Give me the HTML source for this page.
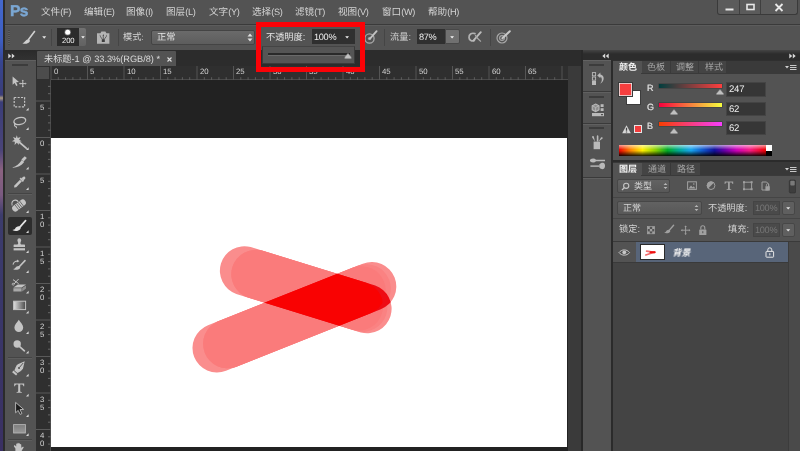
<!DOCTYPE html>
<html lang="zh"><head><meta charset="utf-8"><title>Photoshop</title><style>
html,body{margin:0;padding:0;}
body{width:800px;height:451px;overflow:hidden;position:relative;background:#535353;font-family:"Liberation Sans", "Noto Sans CJK SC", sans-serif;text-rendering:geometricPrecision;}
body>div,body>svg{position:absolute;}
.t{white-space:nowrap;line-height:1.2;will-change:transform;filter:blur(.3px);}
body>svg{filter:blur(.3px);}
</style></head><body>
<div style="left:0px;top:0px;width:3.5px;height:451px;background:linear-gradient(#4468cc 0px,#3d5ec2 40px,#374590 62px,#3a3d78 95px,#a89880 98px,#3a3d78 102px,#4a4478 150px,#8a6280 170px,#7a5a80 195px,#3c3c6c 215px,#39376a 300px,#3a3062 451px);"></div>
<div style="left:2.8px;top:0px;width:2.2px;height:451px;background:#2b2b2b;"></div>
<div style="left:5px;top:0px;width:795px;height:24px;background:#535353;"></div>
<div class="t" style="left:9.800px;top:2.600px;font-size:15.600px;font-weight:bold;color:#7ba7d3;letter-spacing:-0.700px;-webkit-text-stroke:.45px #7ba7d3">Ps</div>
<div class="t" style="left:41px;top:6.8px;font-size:9.6px;color:#d4d4d4;fill:#d4d4d4;">文件<span style="font-size:9.2px;letter-spacing:-0.35px">(F)</span></div>
<div class="t" style="left:83.6px;top:6.8px;font-size:9.6px;color:#d4d4d4;fill:#d4d4d4;">编辑<span style="font-size:9.2px;letter-spacing:-0.35px">(E)</span></div>
<div class="t" style="left:126.4px;top:6.8px;font-size:9.6px;color:#d4d4d4;fill:#d4d4d4;">图像<span style="font-size:9.2px;letter-spacing:-0.35px">(I)</span></div>
<div class="t" style="left:166.4px;top:6.8px;font-size:9.6px;color:#d4d4d4;fill:#d4d4d4;">图层<span style="font-size:9.2px;letter-spacing:-0.35px">(L)</span></div>
<div class="t" style="left:209px;top:6.8px;font-size:9.6px;color:#d4d4d4;fill:#d4d4d4;">文字<span style="font-size:9.2px;letter-spacing:-0.35px">(Y)</span></div>
<div class="t" style="left:252px;top:6.8px;font-size:9.6px;color:#d4d4d4;fill:#d4d4d4;">选择<span style="font-size:9.2px;letter-spacing:-0.35px">(S)</span></div>
<div class="t" style="left:295px;top:6.8px;font-size:9.6px;color:#d4d4d4;fill:#d4d4d4;">滤镜<span style="font-size:9.2px;letter-spacing:-0.35px">(T)</span></div>
<div class="t" style="left:337.5px;top:6.8px;font-size:9.6px;color:#d4d4d4;fill:#d4d4d4;">视图<span style="font-size:9.2px;letter-spacing:-0.35px">(V)</span></div>
<div class="t" style="left:381.5px;top:6.8px;font-size:9.6px;color:#d4d4d4;fill:#d4d4d4;">窗口<span style="font-size:9.2px;letter-spacing:-0.35px">(W)</span></div>
<div class="t" style="left:428.4px;top:6.8px;font-size:9.6px;color:#d4d4d4;fill:#d4d4d4;">帮助<span style="font-size:9.2px;letter-spacing:-0.35px">(H)</span></div>
<div style="left:717px;top:0px;width:81px;height:14.5px;background:#5b5b5b;border:1px solid #3a3a3a;border-top:none;border-radius:0 0 3px 3px;box-sizing:border-box;"></div>
<div style="left:739px;top:0px;width:1px;height:14px;background:#3f3f3f;"></div>
<div style="left:760px;top:0px;width:1px;height:14px;background:#3f3f3f;"></div>
<svg style="left:717px;top:0px;" width="81" height="15" viewBox="0 0 81 15"><path d="M8.5 9.5h8" stroke="#e8e8e8" stroke-width="2"/><rect x="30" y="4.5" width="7" height="5" fill="none" stroke="#e8e8e8" stroke-width="1.6"/><path d="M58.5 4l7 7M65.5 4l-7 7" stroke="#e8e8e8" stroke-width="1.8"/></svg>
<div style="left:5px;top:23.5px;width:795px;height:1.2px;background:#3a3a3a;"></div>
<div style="left:5px;top:24.7px;width:795px;height:1px;background:#5c5c5c;"></div>
<div style="left:5px;top:25.5px;width:795px;height:24px;background:#535353;"></div>
<div style="left:8px;top:30px;width:2px;height:15px;background:repeating-linear-gradient(#474747 0 1px,#5e5e5e 1px 2px);"></div>
<svg style="left:19.5px;top:29px;" width="20" height="18" viewBox="0 0 20 18"><path d="M14.5 2.5L8.5 10.5" stroke="#d0d0d0" stroke-width="1.6" stroke-linecap="round"/><path d="M8.8 10.2c-2 .2-3.2 1.2-4.2 2.6-.6.8-1.4 1.2-2.2 1.4 2.4 1 5.6.6 7-1.2.8-1 .6-2.2-.6-2.8z" fill="#d0d0d0"/></svg>
<svg style="left:42.3px;top:36px;" width="5" height="3" viewBox="0 0 5 3"><path d="M.2 .2h4L2.200 2.700z" fill="#e4e4e4"/></svg>
<div style="left:51px;top:29px;width:1px;height:17px;background:#454545;"></div>
<div style="left:57.2px;top:28px;width:21.6px;height:18px;background:#2b2b2b;"></div>
<svg style="left:57px;top:28px;" width="23" height="10" viewBox="0 0 23 10"><circle cx="10.700" cy="4.200" r="2.500" fill="#fff"/><circle cx="10.700" cy="4.200" r="3.300" fill="#fff" opacity=".3"/></svg>
<div class="t" style="left:62.200px;top:36.200px;font-size:7.700px;color:#f2f2f2;letter-spacing:-0.1px">200</div>
<div style="left:78.8px;top:28px;width:7.4px;height:18.3px;background:linear-gradient(#727272,#626262);border-radius:0 2px 2px 0;"></div>
<svg style="left:80.8px;top:36px;" width="4" height="3" viewBox="0 0 4 3"><path d="M.2 .2h3.600L2 2.400z" fill="#f4f4f4"/></svg>
<svg style="left:97px;top:31px;" width="13" height="13" viewBox="0 0 13 13"><path d="M0 2.200h3.400l1-1.700h4l1 1.700h3V12.700H0z" fill="#b4b4b4"/><path d="M2.600 3.400l1.300 1.800-.7.800zM6.300 3l.8 2.200h-1.600zM10 3.400L8.700 5.200l.7.800z" fill="#3e3e3e"/><path d="M3.600 5.800l1.800 2.600M6.300 5.400v3M9 5.800L7.200 8.400" stroke="#4a4a4a" stroke-width=".8"/><rect x="4.800" y="8.200" width="3" height="2.800" fill="#3e3e3e"/></svg>
<div style="left:118px;top:29px;width:1px;height:17px;background:#454545;"></div>
<div class="t" style="left:123px;top:32px;font-size:9.2px;color:#d4d4d4;fill:#d4d4d4;">模式<span style="font-size:8.004px;letter-spacing:0.1px">:</span></div>
<div style="left:151px;top:29.5px;width:104px;height:15.5px;background:linear-gradient(#6a6a6a,#5d5d5d);border:1px solid #444;box-sizing:border-box;border-radius:2px;"></div>
<div class="t" style="left:157px;top:32px;font-size:9.2px;color:#e6e6e6;fill:#e6e6e6;">正常</div>
<svg style="left:246.5px;top:33px;" width="6" height="9" viewBox="0 0 6 9"><path d="M.5 3.400L3 .6l2.500 2.800zM.5 5.600L3 8.400l2.500-2.800z" fill="#e0e0e0"/></svg>
<div class="t" style="left:265.5px;top:32px;font-size:9.2px;color:#e6e6e6;fill:#e6e6e6;">不透明度<span style="font-size:9.2px;letter-spacing:0.1px">:</span></div>
<div style="left:311.5px;top:29.3px;width:27.5px;height:15px;background:#2f2f2f;"></div>
<div class="t" style="left:314px;top:31.5px;font-size:9.200px;color:#f0f0f0;letter-spacing:-0.3px">100%</div>
<div style="left:339px;top:29.3px;width:15.5px;height:15px;background:#303030;"></div>
<svg style="left:344.6px;top:35.8px;" width="5" height="3" viewBox="0 0 5 3"><path d="M.2 .2h3.800L2.100 2.500z" fill="#f0f0f0"/></svg>
<svg style="left:364px;top:30px;" width="14" height="14" viewBox="0 0 14 14"><circle cx="5.500" cy="8.500" r="4.600" fill="none" stroke="#a8a8a8" stroke-width="1.3"/><circle cx="5.500" cy="8.500" r="1.600" fill="#a8a8a8"/><path d="M12.600 1.200L6 8.600" stroke="#c4c4c4" stroke-width="1.8" stroke-linecap="round"/></svg>
<div style="left:383.5px;top:29px;width:1px;height:17px;background:#454545;"></div>
<div class="t" style="left:390px;top:32px;font-size:9.2px;color:#d4d4d4;fill:#d4d4d4;">流量<span style="font-size:9.2px;letter-spacing:0.1px">:</span></div>
<div style="left:416.5px;top:29.3px;width:28.5px;height:15px;background:#2f2f2f;"></div>
<div class="t" style="left:418.5px;top:31.5px;font-size:9.200px;color:#f0f0f0;letter-spacing:-0.3px">87%</div>
<div style="left:445px;top:29.3px;width:14.5px;height:15px;background:#707070;border-radius:0 2px 2px 0;border:1px solid #484848;box-sizing:border-box;"></div>
<svg style="left:449.8px;top:36px;" width="5" height="3" viewBox="0 0 5 3"><path d="M.2 .2h3.800L2.100 2.500z" fill="#f4f4f4"/></svg>
<svg style="left:467px;top:30px;" width="16" height="14" viewBox="0 0 16 14"><path d="M8 3.600C4.400 2.400 1.800 4.600 2 7.600c.2 2.800 3 4.200 5.400 2.800" fill="none" stroke="#b2b2b2" stroke-width="1.700" stroke-linecap="round"/><path d="M13.800 2.200L6.600 10.400" stroke="#bcbcbc" stroke-width="1.900" stroke-linecap="round"/><path d="M8.400 5.400C10 8 11.600 9.800 13.600 11.200" stroke="#a8a8a8" stroke-width="1.200" fill="none" stroke-linecap="round"/></svg>
<div style="left:489.5px;top:29px;width:1px;height:17px;background:#454545;"></div>
<svg style="left:496px;top:30px;" width="16" height="14" viewBox="0 0 16 14"><circle cx="6" cy="8" r="5" fill="none" stroke="#a8a8a8" stroke-width="1.2"/><circle cx="6" cy="8" r="2.400" fill="none" stroke="#a8a8a8" stroke-width="1.1"/><path d="M13.800 1.200L6.400 8.200" stroke="#c8c8c8" stroke-width="2" stroke-linecap="round"/></svg>
<div style="left:5px;top:49.5px;width:795px;height:401.5px;background:#2b2b2b;"></div>
<div style="left:5px;top:49.5px;width:30.5px;height:10px;background:linear-gradient(#2a2a2a,#323232);"></div>
<svg style="left:8px;top:52.5px;" width="8" height="6" viewBox="0 0 8 6"><path d="M.3 .4L3.200 3 .3 5.600zM3.800 .4L6.700 3 3.800 5.600z" fill="#d8d8d8"/></svg>
<div style="left:5px;top:59.5px;width:30.5px;height:391.5px;background:#535353;"></div>
<div style="left:5px;top:59.5px;width:30.5px;height:1px;background:#606060;"></div>
<div style="left:12px;top:64px;width:16px;height:1.5px;background:#3c3c3c;"></div>
<div style="left:8px;top:193px;width:24px;height:1px;background:#444;"></div>
<div style="left:8px;top:194px;width:24px;height:1px;background:#5d5d5d;"></div>
<div style="left:8px;top:356.5px;width:24px;height:1px;background:#444;"></div>
<div style="left:8px;top:357.5px;width:24px;height:1px;background:#5d5d5d;"></div>
<div style="left:8px;top:439px;width:24px;height:1px;background:#444;"></div>
<div style="left:8px;top:440px;width:24px;height:1px;background:#5d5d5d;"></div>
<div style="left:8px;top:216.5px;width:23.5px;height:18px;background:#2d2d2d;border-radius:2px;"></div>
<svg style="left:0px;top:0px;" width="36" height="451" viewBox="0 0 36 451"><path d="M12.600 76.600v8.200l2.100-1.900 1.500 3 1.400-.7-1.500-3 2.900-.1z" fill="#c4c4c4"/><path d="M22.800 80.800v5.600M20 83.600h5.600" stroke="#c4c4c4" stroke-width="1"/><path d="M22.800 79.800l1.100 1.300h-2.200zM22.800 87.400l1.100-1.300h-2.200zM19 83.600l1.300-1.100v2.200zM26.600 83.600l-1.300-1.100v2.200z" fill="#c4c4c4"/><rect x="14.200" y="97.500" width="10.400" height="9.400" fill="none" stroke="#c4c4c4" stroke-width="1.200" stroke-dasharray="2.100 1.300"/><path d="M28.600 107.800V110.400H26z" fill="#d6d6d6"/><ellipse cx="19.800" cy="121" rx="6" ry="3.500" fill="none" stroke="#c4c4c4" stroke-width="1.300" transform="rotate(-12 19.800 121)"/><path d="M15.800 123.600c-1.600.6-1.800 2.200-.4 2.600 1 .3 1.400 1 .8 2" fill="none" stroke="#c4c4c4" stroke-width="1.100"/><path d="M28.600 127.300V129.900H26z" fill="#d6d6d6"/><path d="M18.500 141.500L26.200 148.200" stroke="#c4c4c4" stroke-width="1.700" stroke-linecap="round"/><path d="M16.800 135.200l.9 2.900 2.900-1.100-1.500 2.700 2.600 1.600-3 .5.300 3.100-2.200-2.200-2.200 2.200.3-3.100-3-.5 2.600-1.600-1.500-2.700 2.900 1.100z" fill="#c4c4c4"/><path d="M28.600 147.300V149.900H26z" fill="#d6d6d6"/><path d="M12.200 167.600c4-1.200 7.400-3.800 9.600-7.600l2.400 2c-2.800 3.800-7.600 5.900-12 5.600z" fill="#c4c4c4"/><path d="M21.400 159.400l3.400-3.200 2 1.700-3.200 3.600z" fill="#c4c4c4"/><path d="M28.600 166.800V169.400H26z" fill="#d6d6d6"/><path d="M14 187.400l.4-2 5.600-5.600 1.800 1.800-5.600 5.600z" fill="#c4c4c4"/><path d="M19.600 178.800l1.300-1.300 3.200 3.200-1.300 1.300z" fill="#c4c4c4"/><path d="M21.800 178.600c.6-1.600 2.200-2.600 3.200-1.600s0 2.600-1.600 3.200z" fill="#c4c4c4"/><path d="M28.600 187.300V189.900H26z" fill="#d6d6d6"/><g transform="rotate(-38 19 205.500)"><rect x="11.200" y="202.300" width="15.600" height="6.400" rx="3.200" fill="#c4c4c4"/><path d="M16.200 202.300v6.400M18.200 202.300v6.400M20.200 202.300v6.400M22.200 202.300v6.400" stroke="#535353" stroke-width=".7"/></g><path d="M12.200 205.500c-1.200-3 .6-5.600 3.400-5.400 1.400.1 2.200.8 2.600 1.600" fill="none" stroke="#c4c4c4" stroke-width="1.100"/><path d="M28.600 210.300V212.900H26z" fill="#d6d6d6"/><path d="M25.600 220.600L19.400 227.600" stroke="#e4e4e4" stroke-width="1.700" stroke-linecap="round"/><path d="M19.400 226.400c-2-.2-3.400.8-4.200 2.200-.6 1-1.600 1.400-2.800 1.400 2.400 1.600 6.200 1.200 7.800-.8.800-1 .4-2.200-.8-2.800z" fill="#e4e4e4"/><path d="M28.600 230.300V232.900H26z" fill="#d6d6d6"/><path d="M17.400 240.200a1.900 1.900 0 0 1 3.800 0c0 1.200-.8 1.800-.8 3 0 .8.600 1.400 1.600 1.400h2.200c.6 0 .8.400.8 1v1.400H13.600v-1.400c0-.6.200-1 .8-1h2.200c1 0 1.600-.6 1.600-1.400 0-1.200-.8-1.800-.8-3z" fill="#c4c4c4"/><rect x="13.600" y="248.200" width="11.400" height="2.200" fill="#c4c4c4"/><path d="M28.600 250.300V252.900H26z" fill="#d6d6d6"/><path d="M25 260.600L19 267" stroke="#c4c4c4" stroke-width="1.600" stroke-linecap="round"/><path d="M19.200 266c-1.800-.2-3 .6-3.800 1.800-.6.800-1.400 1.200-2.400 1.200 2.200 1.400 5.400 1 6.800-.6.800-.9.400-1.900-.6-2.400z" fill="#c4c4c4"/><path d="M13 264.600c.4-2.400 2.600-3.800 5-3.400" fill="none" stroke="#c4c4c4" stroke-width="1.100"/><path d="M17.200 259.400l2.200 1.800-2.600 1.200z" fill="#c4c4c4"/><path d="M28.600 270.300V272.900H26z" fill="#d6d6d6"/><path d="M13.400 287.400l4.400-3h8.200l-4.400 3z" fill="#c4c4c4"/><path d="M13.400 288.200h8.200v3.200h-8.200z" fill="#a8a8a8"/><path d="M22.200 288l3.800-2.600v3.200l-3.800 2.800z" fill="#8e8e8e"/><path d="M13 279.600l5.600 4M18.600 279l-4.600 5" stroke="#c4c4c4" stroke-width="1"/><circle cx="13.200" cy="284.200" r="1" fill="none" stroke="#c4c4c4" stroke-width=".8"/><path d="M28.600 290.800V293.400H26z" fill="#d6d6d6"/><defs><linearGradient id="gt"><stop offset="0" stop-color="#e0e0e0"/><stop offset="1" stop-color="#4a4a4a"/></linearGradient><linearGradient id="gs" x2="0" y2="1"><stop offset="0" stop-color="#7c7c7c"/><stop offset="1" stop-color="#9a9a9a"/></linearGradient></defs><rect x="13.600" y="301.200" width="12" height="8.400" fill="url(#gt)" stroke="#c4c4c4" stroke-width="1"/><path d="M28.600 310.800V313.400H26z" fill="#d6d6d6"/><path d="M18.800 319.800c1.600 2.600 4.400 5 4.400 7.800a4.400 4.400 0 0 1-8.800 0c0-2.800 2.800-5.200 4.400-7.800z" fill="#c4c4c4"/><path d="M28.600 331.300V333.900H26z" fill="#d6d6d6"/><circle cx="17.200" cy="344" r="3.700" fill="#c4c4c4"/><path d="M19.600 346.600L24.400 350.800" stroke="#c4c4c4" stroke-width="1.700" stroke-linecap="round"/><path d="M28.600 350.800V353.400H26z" fill="#d6d6d6"/><g transform="rotate(40 19 368)"><path d="M19 359.200l3.400 6.600c.4 2.400-.6 5-1.400 7h-4c-.8-2-1.800-4.600-1.400-7z" fill="#c4c4c4"/><path d="M19 361.500v6" stroke="#535353" stroke-width=".9"/><circle cx="19" cy="368" r="1" fill="#535353"/><rect x="16.400" y="373.600" width="5.200" height="2" fill="#c4c4c4"/></g><path d="M28.600 373.800V376.400H26z" fill="#d6d6d6"/><path d="M14.200 383.400h10v2.800h-.8c-.2-1.200-.6-1.700-1.800-1.700h-1.400v6.600c0 .8.400 1 1.600 1v.7h-5.200v-.7c1.200 0 1.600-.2 1.600-1v-6.600h-1.400c-1.200 0-1.600.5-1.800 1.700h-.8z" fill="#c4c4c4"/><path d="M28.600 393.800V396.400H26z" fill="#d6d6d6"/><path d="M15.600 402.400v10.400l2.600-2.400 1.900 4 1.800-.8-1.900-4 3.600-.2z" fill="#1c1c1c" stroke="#bdbdbd" stroke-width=".9" stroke-linejoin="round"/><path d="M28.600 414.300V416.900H26z" fill="#d6d6d6"/><rect x="13.600" y="424.600" width="11.800" height="8.400" fill="url(#gs)" stroke="#b4b4b4" stroke-width=".9"/><path d="M28.600 433.300V435.900H26z" fill="#d6d6d6"/><path d="M15.400 451v-2.600l-1.400-2c-.4-.8.600-1.400 1.200-.8l1 1v-2.400c0-.8 1.200-.8 1.200 0v-.8c0-.8 1.300-.8 1.300 0v.4c0-.8 1.300-.8 1.300 0v.8c0-.7 1.200-.7 1.200 0l.2 3.400c.6-.8 1.600-1.600 2.200-1 .4.400-.6 1.400-1.200 2.600l-.8 1.400z" fill="#c4c4c4"/></svg>
<div style="left:36px;top:49.5px;width:545px;height:16px;background:#2c2c2c;"></div>
<div style="left:36.5px;top:51px;width:139.5px;height:14.5px;background:#535353;border-radius:1px 1px 0 0;"></div>
<div class="t" style="left:43.5px;top:53.5px;font-size:9.2px;color:#dadada;fill:#dadada;">未标题<span style="font-size:9.2px;letter-spacing:0px">-1 @ 33.3%(RGB/8) *</span></div>
<svg style="left:165.5px;top:55.5px;" width="8" height="8" viewBox="0 0 8 8"><path d="M1.500 1.500l4 4M5.500 1.500l-4 4" stroke="#dcdcdc" stroke-width="1.100"/></svg>
<div style="left:36px;top:65.5px;width:532px;height:14px;background:#2f2f2f;"></div>
<div style="left:36px;top:79.5px;width:14.5px;height:371.5px;background:#2f2f2f;"></div>
<div style="left:36.5px;top:66.5px;width:12.5px;height:12px;background:#4c4c4c;"></div>
<div style="left:50.5px;top:79px;width:517.5px;height:0.8px;background:#4a4a4a;"></div>
<div style="left:50px;top:79.5px;width:0.8px;height:371.5px;background:#4a4a4a;"></div>
<div style="left:51px;top:80px;width:517px;height:371px;background:#222222;"></div>
<div style="left:51px;top:137.5px;width:516.2px;height:309.3px;background:#ffffff;"></div>
<div style="left:568px;top:65.5px;width:12.5px;height:385.5px;background:#3a3a3a;"></div>
<div style="left:580.5px;top:49.5px;width:2px;height:401.5px;background:#282828;"></div>
<svg style="left:0px;top:65.5px;" width="568" height="14" viewBox="0 0 568 14"><path d="M51.0 0V14" stroke="#555" stroke-width="1"/><path d="M58.3 11.200V14" stroke="#5c5c5c" stroke-width="1"/><path d="M65.6 11.200V14" stroke="#5c5c5c" stroke-width="1"/><path d="M72.9 11.200V14" stroke="#5c5c5c" stroke-width="1"/><path d="M80.2 11.200V14" stroke="#5c5c5c" stroke-width="1"/><path d="M87.5 0V14" stroke="#555" stroke-width="1"/><path d="M94.8 11.200V14" stroke="#5c5c5c" stroke-width="1"/><path d="M102.1 11.200V14" stroke="#5c5c5c" stroke-width="1"/><path d="M109.4 11.200V14" stroke="#5c5c5c" stroke-width="1"/><path d="M116.7 11.200V14" stroke="#5c5c5c" stroke-width="1"/><path d="M124.0 0V14" stroke="#555" stroke-width="1"/><path d="M131.3 11.200V14" stroke="#5c5c5c" stroke-width="1"/><path d="M138.6 11.200V14" stroke="#5c5c5c" stroke-width="1"/><path d="M145.9 11.200V14" stroke="#5c5c5c" stroke-width="1"/><path d="M153.2 11.200V14" stroke="#5c5c5c" stroke-width="1"/><path d="M160.5 0V14" stroke="#555" stroke-width="1"/><path d="M167.8 11.200V14" stroke="#5c5c5c" stroke-width="1"/><path d="M175.1 11.200V14" stroke="#5c5c5c" stroke-width="1"/><path d="M182.4 11.200V14" stroke="#5c5c5c" stroke-width="1"/><path d="M189.7 11.200V14" stroke="#5c5c5c" stroke-width="1"/><path d="M197.0 0V14" stroke="#555" stroke-width="1"/><path d="M204.3 11.200V14" stroke="#5c5c5c" stroke-width="1"/><path d="M211.6 11.200V14" stroke="#5c5c5c" stroke-width="1"/><path d="M218.9 11.200V14" stroke="#5c5c5c" stroke-width="1"/><path d="M226.2 11.200V14" stroke="#5c5c5c" stroke-width="1"/><path d="M233.5 0V14" stroke="#555" stroke-width="1"/><path d="M240.8 11.200V14" stroke="#5c5c5c" stroke-width="1"/><path d="M248.1 11.200V14" stroke="#5c5c5c" stroke-width="1"/><path d="M255.4 11.200V14" stroke="#5c5c5c" stroke-width="1"/><path d="M262.7 11.200V14" stroke="#5c5c5c" stroke-width="1"/><path d="M270.0 0V14" stroke="#555" stroke-width="1"/><path d="M277.3 11.200V14" stroke="#5c5c5c" stroke-width="1"/><path d="M284.6 11.200V14" stroke="#5c5c5c" stroke-width="1"/><path d="M291.9 11.200V14" stroke="#5c5c5c" stroke-width="1"/><path d="M299.2 11.200V14" stroke="#5c5c5c" stroke-width="1"/><path d="M306.5 0V14" stroke="#555" stroke-width="1"/><path d="M313.8 11.200V14" stroke="#5c5c5c" stroke-width="1"/><path d="M321.1 11.200V14" stroke="#5c5c5c" stroke-width="1"/><path d="M328.4 11.200V14" stroke="#5c5c5c" stroke-width="1"/><path d="M335.7 11.200V14" stroke="#5c5c5c" stroke-width="1"/><path d="M343.0 0V14" stroke="#555" stroke-width="1"/><path d="M350.3 11.200V14" stroke="#5c5c5c" stroke-width="1"/><path d="M357.6 11.200V14" stroke="#5c5c5c" stroke-width="1"/><path d="M364.9 11.200V14" stroke="#5c5c5c" stroke-width="1"/><path d="M372.2 11.200V14" stroke="#5c5c5c" stroke-width="1"/><path d="M379.5 0V14" stroke="#555" stroke-width="1"/><path d="M386.8 11.200V14" stroke="#5c5c5c" stroke-width="1"/><path d="M394.1 11.200V14" stroke="#5c5c5c" stroke-width="1"/><path d="M401.4 11.200V14" stroke="#5c5c5c" stroke-width="1"/><path d="M408.7 11.200V14" stroke="#5c5c5c" stroke-width="1"/><path d="M416.0 0V14" stroke="#555" stroke-width="1"/><path d="M423.3 11.200V14" stroke="#5c5c5c" stroke-width="1"/><path d="M430.6 11.200V14" stroke="#5c5c5c" stroke-width="1"/><path d="M437.9 11.200V14" stroke="#5c5c5c" stroke-width="1"/><path d="M445.2 11.200V14" stroke="#5c5c5c" stroke-width="1"/><path d="M452.5 0V14" stroke="#555" stroke-width="1"/><path d="M459.8 11.200V14" stroke="#5c5c5c" stroke-width="1"/><path d="M467.1 11.200V14" stroke="#5c5c5c" stroke-width="1"/><path d="M474.4 11.200V14" stroke="#5c5c5c" stroke-width="1"/><path d="M481.7 11.200V14" stroke="#5c5c5c" stroke-width="1"/><path d="M489.0 0V14" stroke="#555" stroke-width="1"/><path d="M496.3 11.200V14" stroke="#5c5c5c" stroke-width="1"/><path d="M503.6 11.200V14" stroke="#5c5c5c" stroke-width="1"/><path d="M510.9 11.200V14" stroke="#5c5c5c" stroke-width="1"/><path d="M518.2 11.200V14" stroke="#5c5c5c" stroke-width="1"/><path d="M525.5 0V14" stroke="#555" stroke-width="1"/><path d="M532.8 11.200V14" stroke="#5c5c5c" stroke-width="1"/><path d="M540.1 11.200V14" stroke="#5c5c5c" stroke-width="1"/><path d="M547.4 11.200V14" stroke="#5c5c5c" stroke-width="1"/><path d="M554.7 11.200V14" stroke="#5c5c5c" stroke-width="1"/><path d="M562.0 0V14" stroke="#555" stroke-width="1"/></svg>
<div class="t" style="left:53.8px;top:67px;font-size:7.800px;color:#d2d2d2;letter-spacing:-0.1px">0</div>
<div class="t" style="left:90.3px;top:67px;font-size:7.800px;color:#d2d2d2;letter-spacing:-0.1px">5</div>
<div class="t" style="left:126.8px;top:67px;font-size:7.800px;color:#d2d2d2;letter-spacing:-0.1px">10</div>
<div class="t" style="left:163.3px;top:67px;font-size:7.800px;color:#d2d2d2;letter-spacing:-0.1px">15</div>
<div class="t" style="left:199.8px;top:67px;font-size:7.800px;color:#d2d2d2;letter-spacing:-0.1px">20</div>
<div class="t" style="left:236.3px;top:67px;font-size:7.800px;color:#d2d2d2;letter-spacing:-0.1px">25</div>
<div class="t" style="left:272.8px;top:67px;font-size:7.800px;color:#d2d2d2;letter-spacing:-0.1px">30</div>
<div class="t" style="left:309.3px;top:67px;font-size:7.800px;color:#d2d2d2;letter-spacing:-0.1px">35</div>
<div class="t" style="left:345.8px;top:67px;font-size:7.800px;color:#d2d2d2;letter-spacing:-0.1px">40</div>
<div class="t" style="left:382.3px;top:67px;font-size:7.800px;color:#d2d2d2;letter-spacing:-0.1px">45</div>
<div class="t" style="left:418.8px;top:67px;font-size:7.800px;color:#d2d2d2;letter-spacing:-0.1px">50</div>
<div class="t" style="left:455.3px;top:67px;font-size:7.800px;color:#d2d2d2;letter-spacing:-0.1px">55</div>
<div class="t" style="left:491.8px;top:67px;font-size:7.800px;color:#d2d2d2;letter-spacing:-0.1px">60</div>
<div class="t" style="left:528.3px;top:67px;font-size:7.800px;color:#d2d2d2;letter-spacing:-0.1px">65</div>
<svg style="left:0px;top:0px;" width="51" height="451" viewBox="0 0 51 451"><path d="M48 86.4H50.500" stroke="#676767" stroke-width="1"/><path d="M48 93.7H50.500" stroke="#676767" stroke-width="1"/><path d="M36 101.0H50.500" stroke="#5a5a5a" stroke-width="1"/><path d="M48 108.3H50.500" stroke="#676767" stroke-width="1"/><path d="M48 115.6H50.500" stroke="#676767" stroke-width="1"/><path d="M48 122.9H50.500" stroke="#676767" stroke-width="1"/><path d="M48 130.2H50.500" stroke="#676767" stroke-width="1"/><path d="M36 137.5H50.500" stroke="#5a5a5a" stroke-width="1"/><path d="M48 144.8H50.500" stroke="#676767" stroke-width="1"/><path d="M48 152.1H50.500" stroke="#676767" stroke-width="1"/><path d="M48 159.4H50.500" stroke="#676767" stroke-width="1"/><path d="M48 166.7H50.500" stroke="#676767" stroke-width="1"/><path d="M36 174.0H50.500" stroke="#5a5a5a" stroke-width="1"/><path d="M48 181.3H50.500" stroke="#676767" stroke-width="1"/><path d="M48 188.6H50.500" stroke="#676767" stroke-width="1"/><path d="M48 195.9H50.500" stroke="#676767" stroke-width="1"/><path d="M48 203.2H50.500" stroke="#676767" stroke-width="1"/><path d="M36 210.5H50.500" stroke="#5a5a5a" stroke-width="1"/><path d="M48 217.8H50.500" stroke="#676767" stroke-width="1"/><path d="M48 225.1H50.500" stroke="#676767" stroke-width="1"/><path d="M48 232.4H50.500" stroke="#676767" stroke-width="1"/><path d="M48 239.7H50.500" stroke="#676767" stroke-width="1"/><path d="M36 247.0H50.500" stroke="#5a5a5a" stroke-width="1"/><path d="M48 254.3H50.500" stroke="#676767" stroke-width="1"/><path d="M48 261.6H50.500" stroke="#676767" stroke-width="1"/><path d="M48 268.9H50.500" stroke="#676767" stroke-width="1"/><path d="M48 276.2H50.500" stroke="#676767" stroke-width="1"/><path d="M36 283.5H50.500" stroke="#5a5a5a" stroke-width="1"/><path d="M48 290.8H50.500" stroke="#676767" stroke-width="1"/><path d="M48 298.1H50.500" stroke="#676767" stroke-width="1"/><path d="M48 305.4H50.500" stroke="#676767" stroke-width="1"/><path d="M48 312.7H50.500" stroke="#676767" stroke-width="1"/><path d="M36 320.0H50.500" stroke="#5a5a5a" stroke-width="1"/><path d="M48 327.3H50.500" stroke="#676767" stroke-width="1"/><path d="M48 334.6H50.500" stroke="#676767" stroke-width="1"/><path d="M48 341.9H50.500" stroke="#676767" stroke-width="1"/><path d="M48 349.2H50.500" stroke="#676767" stroke-width="1"/><path d="M36 356.5H50.500" stroke="#5a5a5a" stroke-width="1"/><path d="M48 363.8H50.500" stroke="#676767" stroke-width="1"/><path d="M48 371.1H50.500" stroke="#676767" stroke-width="1"/><path d="M48 378.4H50.500" stroke="#676767" stroke-width="1"/><path d="M48 385.7H50.500" stroke="#676767" stroke-width="1"/><path d="M36 393.0H50.500" stroke="#5a5a5a" stroke-width="1"/><path d="M48 400.3H50.500" stroke="#676767" stroke-width="1"/><path d="M48 407.6H50.500" stroke="#676767" stroke-width="1"/><path d="M48 414.9H50.500" stroke="#676767" stroke-width="1"/><path d="M48 422.2H50.500" stroke="#676767" stroke-width="1"/><path d="M36 429.5H50.500" stroke="#5a5a5a" stroke-width="1"/><path d="M48 436.8H50.500" stroke="#676767" stroke-width="1"/><path d="M48 444.1H50.500" stroke="#676767" stroke-width="1"/></svg>
<div class="t" style="left:40px;top:102.5px;font-size:7.800px;color:#d2d2d2;">5</div>
<div class="t" style="left:40px;top:139.0px;font-size:7.800px;color:#d2d2d2;">0</div>
<div class="t" style="left:40px;top:175.5px;font-size:7.800px;color:#d2d2d2;">5</div>
<div class="t" style="left:40px;top:212.0px;font-size:7.800px;color:#d2d2d2;">1</div>
<div class="t" style="left:40px;top:220.0px;font-size:7.800px;color:#d2d2d2;">0</div>
<div class="t" style="left:40px;top:248.5px;font-size:7.800px;color:#d2d2d2;">1</div>
<div class="t" style="left:40px;top:256.5px;font-size:7.800px;color:#d2d2d2;">5</div>
<div class="t" style="left:40px;top:285.0px;font-size:7.800px;color:#d2d2d2;">2</div>
<div class="t" style="left:40px;top:293.0px;font-size:7.800px;color:#d2d2d2;">0</div>
<div class="t" style="left:40px;top:321.5px;font-size:7.800px;color:#d2d2d2;">2</div>
<div class="t" style="left:40px;top:329.5px;font-size:7.800px;color:#d2d2d2;">5</div>
<div class="t" style="left:40px;top:358.0px;font-size:7.800px;color:#d2d2d2;">3</div>
<div class="t" style="left:40px;top:366.0px;font-size:7.800px;color:#d2d2d2;">0</div>
<div class="t" style="left:40px;top:394.5px;font-size:7.800px;color:#d2d2d2;">3</div>
<div class="t" style="left:40px;top:402.5px;font-size:7.800px;color:#d2d2d2;">5</div>
<div class="t" style="left:40px;top:431.0px;font-size:7.800px;color:#d2d2d2;">4</div>
<div class="t" style="left:40px;top:439.0px;font-size:7.800px;color:#d2d2d2;">0</div>
<svg style="left:51px;top:137px" width="516" height="310" viewBox="51 137 516 310"><defs><clipPath id="ca"><path d="M236.3 293.9L360.8 332.4A24.5 24.5 0 0 0 375.2 285.6L250.7 247.1A24.5 24.5 0 0 0 236.3 293.9Z"/></clipPath><clipPath id="cm"><path d="M248.2 297.6L351.7 329.6A24.5 24.5 0 0 0 366.2 282.8L262.7 250.8A24.5 24.5 0 0 0 248.2 297.6Z"/></clipPath></defs><path d="M236.3 293.9L360.8 332.4A24.5 24.5 0 0 0 375.2 285.6L250.7 247.1A24.5 24.5 0 0 0 236.3 293.9Z" fill="#fa8d8d"/><path d="M226.0 370.8L380.8 309.3A24.5 24.5 0 0 0 362.8 263.7L208.0 325.2A24.5 24.5 0 0 0 226.0 370.8Z" fill="#fa8d8d"/><path d="M248.2 297.6L356.5 331.1A24.5 24.5 0 0 0 370.9 284.3L262.7 250.8A24.5 24.5 0 0 0 248.2 297.6Z" fill="#fa8282"/><path d="M235.8 366.9L376.2 311.1A24.5 24.5 0 0 0 358.1 265.6L217.7 321.4A24.5 24.5 0 0 0 235.8 366.9Z" fill="#fa8282"/><path d="M248.2 297.6L351.7 329.6A24.5 24.5 0 0 0 366.2 282.8L262.7 250.8A24.5 24.5 0 0 0 248.2 297.6Z" fill="#fa7b7b"/><path d="M235.8 366.9L371.1 313.1A24.5 24.5 0 0 0 353.0 267.6L217.7 321.4A24.5 24.5 0 0 0 235.8 366.9Z" fill="#fa7b7b"/><path d="M226.0 370.8L380.8 309.3A24.5 24.5 0 0 0 362.8 263.7L208.0 325.2A24.5 24.5 0 0 0 226.0 370.8Z" fill="#ee0b14" clip-path="url(#ca)"/><path d="M235.8 366.9L371.1 313.1A24.5 24.5 0 0 0 353.0 267.6L217.7 321.4A24.5 24.5 0 0 0 235.8 366.9Z" fill="#f90202" clip-path="url(#cm)"/></svg>
<div style="left:261.5px;top:45.8px;width:93.5px;height:18.4px;background:#555555;border:1px solid #3a3a3a;border-top-color:#444;box-sizing:border-box;"></div>
<div style="left:268px;top:53.2px;width:82px;height:1.6px;background:#2a2a2a;"></div>
<div style="left:268px;top:54.8px;width:82px;height:1px;background:#6a6a6a;"></div>
<svg style="left:343.8px;top:52.5px;" width="8" height="7" viewBox="0 0 8 7"><path d="M4 .3L7.300 4V5.800H.7V4z" fill="#c2c2c2" stroke="#6a6a6a" stroke-width=".5"/></svg>
<div style="left:256px;top:22px;width:108.8px;height:49.6px;background:transparent;border:5px solid #fb0207;box-sizing:border-box;"></div>
<div style="left:582.5px;top:49.5px;width:217.5px;height:10px;background:linear-gradient(#444 0,#2c2c2c 4px,#2c2c2c 100%);"></div>
<svg style="left:601.5px;top:52.5px;" width="8" height="6" viewBox="0 0 8 6"><path d="M3.200 .4L.3 3l2.900 2.600zM6.700 .4L3.800 3l2.900 2.600z" fill="#d8d8d8"/></svg>
<svg style="left:789px;top:52.5px;" width="8" height="6" viewBox="0 0 8 6"><path d="M.3 .4L3.200 3 .3 5.600zM3.800 .4L6.700 3 3.800 5.600z" fill="#d8d8d8"/></svg>
<div style="left:582.5px;top:59.5px;width:28.5px;height:391.5px;background:#535353;"></div>
<div style="left:582.5px;top:59.5px;width:28.5px;height:1px;background:#626262;"></div>
<div style="left:589px;top:64px;width:15px;height:1.5px;background:#3c3c3c;"></div>
<div style="left:589px;top:96px;width:15px;height:1.5px;background:#3c3c3c;"></div>
<div style="left:589px;top:127px;width:15px;height:1.5px;background:#3c3c3c;"></div>
<div style="left:582.5px;top:91px;width:28.5px;height:1.2px;background:#3a3a3a;"></div>
<div style="left:582.5px;top:92.2px;width:28.5px;height:1px;background:#606060;"></div>
<div style="left:582.5px;top:122.5px;width:28.5px;height:1.2px;background:#3a3a3a;"></div>
<div style="left:582.5px;top:123.7px;width:28.5px;height:1px;background:#606060;"></div>
<div style="left:582.5px;top:176.5px;width:28.5px;height:1.2px;background:#3a3a3a;"></div>
<div style="left:582.5px;top:177.7px;width:28.5px;height:1px;background:#606060;"></div>
<div style="left:611px;top:59.5px;width:2px;height:391.5px;background:#2b2b2b;"></div>
<svg style="left:582px;top:59px;" width="30" height="125" viewBox="582 59 30 125"><rect x="592.400" y="72.6" width="3.200" height="3.200" fill="none" stroke="#bababa" stroke-width=".9"/><rect x="592.400" y="77" width="3.200" height="3.200" fill="none" stroke="#bababa" stroke-width=".9"/><rect x="592" y="81.0" width="4" height="4" fill="#bababa"/><path d="M599.200 74.600c3.600-.2 5.200 2.600 4.200 5.400-.6 1.800-1.800 3-3.200 3.800 1.200-1.600 1.800-3.200 1.600-4.800-.2-1.600-1.200-2.400-2.600-2.400z" fill="#bababa"/><path d="M597.200 75.600l3.200-3v5.600z" fill="#bababa"/><path d="M595.600 104l3.400 1.800v4l-3.400 1.800-3.400-1.800v-4z" fill="#8c8c8c" stroke="#bababa" stroke-width="1.100"/><path d="M592.400 105.800l3.200 1.700 3.200-1.700M595.600 107.500v3.800" stroke="#bababa" stroke-width=".8" fill="none"/><rect x="600.600" y="104.200" width="3" height="2.800" fill="#bababa"/><rect x="600.600" y="108.200" width="3" height="2.800" fill="#bababa"/><rect x="592" y="113" width="12" height="3.200" fill="#bababa"/><rect x="601" y="114" width="2" height="1.200" fill="#535353"/><path d="M593.600 141.600h6.400v7.600h-6.400z" fill="#bababa"/><path d="M595 141.400l-2.800-3.800c-.6-1.200.6-2.200 1.600-1.200zM596.800 141.400v-5.200c0-1.400 1.600-1.400 1.600 0v5.200zM598.600 141.400l2.400-3.800c.8-1 2.200-.2 1.600 1z" fill="#bababa"/><path d="M590 159.800c2-1.600 4.600-1.600 6 0h9v1.400h-9c-1.400 1.600-4 1.600-6 0z" fill="#bababa"/><path d="M590.400 165.400h9.200v1.400h-9.200z" fill="#bababa"/><path d="M599.400 164.200c1.200-1.400 3-2 4.400-1.200 1.600 1 1.600 4.400 0 5.800-1.400 1-3.200.2-4.400-1.200z" fill="#bababa"/></svg>
<div style="left:613px;top:59.5px;width:187px;height:14px;background:#3a3a3a;"></div>
<div style="left:613px;top:73.5px;width:187px;height:87px;background:#535353;"></div>
<div style="left:613px;top:60.2px;width:28.5px;height:14px;background:#535353;"></div>
<div style="left:613px;top:59.5px;width:187px;height:1px;background:#2f2f2f;"></div>
<div style="left:642.3px;top:60.5px;width:27.700000000000045px;height:12.5px;background:#444444;"></div>
<div style="left:670.8px;top:60.5px;width:27.700000000000045px;height:12.5px;background:#444444;"></div>
<div style="left:699.3px;top:60.5px;width:27.0px;height:12.5px;background:#444444;"></div>
<div style="left:613px;top:73px;width:187px;height:0.8px;background:#3a3a3a;"></div>
<div style="left:613px;top:73px;width:28px;height:1px;background:#535353;"></div>
<div class="t" style="left:619.3px;top:62.2px;font-size:9px;color:#f2f2f2;fill:#f2f2f2;font-weight:bold;stroke:#f2f2f2;stroke-width:3.500;">颜色</div>
<div class="t" style="left:647px;top:62.2px;font-size:9px;color:#a6a6a6;fill:#a6a6a6;">色板</div>
<div class="t" style="left:675.6px;top:62.2px;font-size:9px;color:#a6a6a6;fill:#a6a6a6;">调整</div>
<div class="t" style="left:704.8px;top:62.2px;font-size:9px;color:#a6a6a6;fill:#a6a6a6;">样式</div>
<svg style="left:785px;top:63.5px;" width="12" height="8" viewBox="0 0 12 8"><path d="M0 2h4L2 4.600z" fill="#d0d0d0"/><path d="M5 1.500h6.500M5 3.500h6.500M5 5.500h6.500" stroke="#c8c8c8" stroke-width="1"/></svg>
<div style="left:625.8px;top:90.2px;width:14.8px;height:14.4px;background:#ffffff;border:.8px solid #3c3c3c;box-sizing:border-box;"></div>
<div style="left:617.5px;top:82px;width:15.3px;height:15.3px;background:#f73e3e;border:.7px solid #3a3a3a;box-shadow:inset 0 0 0 .8px #ececec;box-sizing:border-box;"></div>
<div class="t" style="left:646.500px;top:83.3px;font-size:9px;color:#e2e2e2;-webkit-text-stroke:.2px #e2e2e2">R</div>
<div class="t" style="left:646.500px;top:102.3px;font-size:9px;color:#e2e2e2;-webkit-text-stroke:.2px #e2e2e2">G</div>
<div class="t" style="left:646.500px;top:121.3px;font-size:9px;color:#e2e2e2;-webkit-text-stroke:.2px #e2e2e2">B</div>
<div style="left:659px;top:83.8px;width:63px;height:4.2px;background:linear-gradient(90deg,#003e3e,#ff3e3e);box-shadow:0 0 0 .6px #3e3e3e;"></div>
<div style="left:659px;top:103px;width:63px;height:4.2px;background:linear-gradient(90deg,#f7003e,#f7ff3e);box-shadow:0 0 0 .6px #3e3e3e;"></div>
<div style="left:659px;top:122.3px;width:63px;height:4.2px;background:linear-gradient(90deg,#f73e00,#f73eff);box-shadow:0 0 0 .6px #3e3e3e;"></div>
<svg style="left:715.5px;top:89px;" width="8" height="6" viewBox="0 0 8 6"><path d="M4 .3L7.600 4.400V5.700H.4V4.400z" fill="#c0c0c0" stroke="#6a6a6a" stroke-width=".5"/></svg>
<svg style="left:669.8px;top:108.5px;" width="8" height="6" viewBox="0 0 8 6"><path d="M4 .3L7.600 4.400V5.700H.4V4.400z" fill="#c0c0c0" stroke="#6a6a6a" stroke-width=".5"/></svg>
<svg style="left:669.8px;top:127.8px;" width="8" height="6" viewBox="0 0 8 6"><path d="M4 .3L7.600 4.400V5.700H.4V4.400z" fill="#c0c0c0" stroke="#6a6a6a" stroke-width=".5"/></svg>
<div style="left:725.5px;top:82px;width:40px;height:14.5px;background:#363636;border:1px solid #444;box-sizing:border-box;"></div>
<div class="t" style="left:729px;top:84px;font-size:9.500px;color:#f0f0f0;letter-spacing:-0.2px">247</div>
<div style="left:725.5px;top:101.5px;width:40px;height:14.5px;background:#363636;border:1px solid #444;box-sizing:border-box;"></div>
<div class="t" style="left:729px;top:103.5px;font-size:9.500px;color:#f0f0f0;letter-spacing:-0.2px">62</div>
<div style="left:725.5px;top:120.5px;width:40px;height:14.5px;background:#363636;border:1px solid #444;box-sizing:border-box;"></div>
<div class="t" style="left:729px;top:122.5px;font-size:9.500px;color:#f0f0f0;letter-spacing:-0.2px">62</div>
<svg style="left:621.5px;top:125px;" width="9" height="8.5" viewBox="0 0 9 8.5"><path d="M4.500 .3L8.800 8.200H.2z" fill="#d8d8d8"/><path d="M4.500 2.800V5.800M4.500 6.500V7.500" stroke="#444" stroke-width="1.300"/></svg>
<div style="left:633.5px;top:124.5px;width:8.5px;height:8.5px;background:#f23c3c;border:1px solid #e6e6e6;box-sizing:border-box;"></div>
<div style="left:618.5px;top:145px;width:147.5px;height:11.3px;background:linear-gradient(90deg,#ee0000 0%,#ff8800 8%,#fff000 16%,#88d000 25%,#00aa28 33%,#00aa98 41%,#18a4ee 49%,#1058cc 57%,#10109a 65%,#6a00a8 72%,#cc00b8 80%,#f61c84 89%,#ee0000 100%);"></div>
<div style="left:618.5px;top:145px;width:147.5px;height:11.3px;background:linear-gradient(rgba(255,255,255,.6) 0%,rgba(255,255,255,0) 42%,rgba(0,0,0,0) 52%,rgba(0,0,0,.9) 100%);"></div>
<div style="left:766px;top:145px;width:6px;height:5.7px;background:#ffffff;"></div>
<div style="left:766px;top:150.7px;width:6px;height:5.6px;background:#000000;"></div>
<div style="left:613px;top:160.3px;width:187px;height:2px;background:#2b2b2b;"></div>
<div style="left:613px;top:162.3px;width:187px;height:13.2px;background:#383838;"></div>
<div style="left:613px;top:175.5px;width:187px;height:66.5px;background:#535353;"></div>
<div style="left:613px;top:162.5px;width:28.5px;height:13.5px;background:#535353;"></div>
<div style="left:642.3px;top:163px;width:27.700000000000045px;height:12.5px;background:#444444;"></div>
<div style="left:670.8px;top:163px;width:29.200000000000045px;height:12.5px;background:#444444;"></div>
<div style="left:641px;top:175px;width:159px;height:0.8px;background:#3a3a3a;"></div>
<div class="t" style="left:619.3px;top:164.2px;font-size:9px;color:#f2f2f2;fill:#f2f2f2;font-weight:bold;stroke:#f2f2f2;stroke-width:3.500;">图层</div>
<div class="t" style="left:647.5px;top:164.2px;font-size:9px;color:#a6a6a6;fill:#a6a6a6;">通道</div>
<div class="t" style="left:676.8px;top:164.2px;font-size:9px;color:#a6a6a6;fill:#a6a6a6;">路径</div>
<svg style="left:785px;top:166px;" width="12" height="8" viewBox="0 0 12 8"><path d="M0 2h4L2 4.600z" fill="#d0d0d0"/><path d="M5 1.500h6.500M5 3.500h6.500M5 5.500h6.500" stroke="#c8c8c8" stroke-width="1"/></svg>
<div style="left:617px;top:178.7px;width:52.5px;height:14.5px;background:linear-gradient(#626262,#585858);border:1px solid #474747;box-sizing:border-box;border-radius:2px;"></div>
<svg style="left:621px;top:181.5px;" width="9" height="9" viewBox="0 0 9 9"><circle cx="5.200" cy="3.800" r="2.600" fill="none" stroke="#c4c4c4" stroke-width="1.100"/><path d="M3.400 5.600L1 8" stroke="#c4c4c4" stroke-width="1.300"/></svg>
<div class="t" style="left:633.8px;top:181px;font-size:9px;color:#d4d4d4;fill:#d4d4d4;">类型</div>
<svg style="left:663px;top:182.3px;" width="5" height="8" viewBox="0 0 5 8"><path d="M.6 3.100L2.500 1l1.900 2.100zM.6 4.900L2.500 7l1.900-2.100z" fill="#b8b8b8"/></svg>
<div style="left:613px;top:197px;width:187px;height:1px;background:#454545;"></div>
<div style="left:617px;top:200.5px;width:84.5px;height:14.5px;background:linear-gradient(#626262,#585858);border:1px solid #474747;box-sizing:border-box;border-radius:2px;"></div>
<div class="t" style="left:623.3px;top:202.8px;font-size:9px;color:#d4d4d4;fill:#d4d4d4;">正常</div>
<svg style="left:694px;top:204px;" width="5" height="8" viewBox="0 0 5 8"><path d="M.6 3.100L2.500 1l1.900 2.100zM.6 4.900L2.500 7l1.900-2.100z" fill="#b8b8b8"/></svg>
<div class="t" style="left:708.3px;top:202.8px;font-size:9.2px;color:#d4d4d4;fill:#d4d4d4;">不透明度<span style="font-size:9.2px;letter-spacing:0.1px">:</span></div>
<div style="left:752.5px;top:200.5px;width:27.5px;height:14.5px;background:#4a4a4a;border:1px solid #444;box-sizing:border-box;"></div>
<div class="t" style="left:755px;top:202.800px;font-size:9.200px;color:#777;letter-spacing:-0.3px">100%</div>
<div style="left:782px;top:200.5px;width:13px;height:14.5px;background:#5f5f5f;border:1px solid #474747;box-sizing:border-box;border-radius:2px;"></div>
<svg style="left:786.3px;top:206.8px;" width="5" height="3" viewBox="0 0 5 3"><path d="M.2 .2h4L2.200 2.600z" fill="#e4e4e4"/></svg>
<div style="left:613px;top:218px;width:187px;height:1px;background:#454545;"></div>
<div class="t" style="left:618.5px;top:223.8px;font-size:9.2px;color:#d4d4d4;fill:#d4d4d4;">锁定<span style="font-size:9.2px;letter-spacing:0.1px">:</span></div>
<div class="t" style="left:727.5px;top:223.8px;font-size:9.2px;color:#d4d4d4;fill:#d4d4d4;">填充<span style="font-size:9.2px;letter-spacing:0.1px">:</span></div>
<div style="left:752.5px;top:222.5px;width:27.5px;height:14.5px;background:#4a4a4a;border:1px solid #444;box-sizing:border-box;"></div>
<div class="t" style="left:755px;top:224.800px;font-size:9.200px;color:#777;letter-spacing:-0.3px">100%</div>
<div style="left:782px;top:222.5px;width:13px;height:14.5px;background:#5f5f5f;border:1px solid #474747;box-sizing:border-box;border-radius:2px;"></div>
<svg style="left:786.3px;top:228.8px;" width="5" height="3" viewBox="0 0 5 3"><path d="M.2 .2h4L2.200 2.600z" fill="#e4e4e4"/></svg>
<div style="left:613px;top:240.5px;width:187px;height:1.5px;background:#3a3a3a;"></div>
<div style="left:613px;top:241.6px;width:175px;height:209.4px;background:#444444;"></div>
<div style="left:788px;top:241.6px;width:12px;height:209.4px;background:#4a4a4a;"></div>
<div style="left:788px;top:241.6px;width:1px;height:209.4px;background:#3c3c3c;"></div>
<div style="left:613px;top:241.6px;width:23.2px;height:20.6px;background:#535353;"></div>
<div style="left:636.2px;top:241.6px;width:151.8px;height:20.6px;background:#586579;"></div>
<div style="left:613px;top:262.2px;width:175px;height:1px;background:#3a3a3a;"></div>
<div style="left:639.6px;top:244.2px;width:25.2px;height:15.5px;background:#ffffff;border:1px solid #2a2a2a;box-sizing:border-box;"></div>
<svg style="left:644px;top:248px;" width="14" height="10" viewBox="0 0 14 10"><path d="M2.600 3.200L10.600 4.400" stroke="#f47070" stroke-width="1.700" stroke-linecap="round"/><path d="M1.800 7L10.800 4" stroke="#f26a6a" stroke-width="1.700" stroke-linecap="round"/><path d="M6.500 4.300L10.600 4.300" stroke="#ee1010" stroke-width="1.900" stroke-linecap="round"/></svg>
<div class="t" style="left:673.3px;top:248.2px;font-size:9px;color:#f4f4f4;fill:#f4f4f4;font-weight:bold;stroke:#f4f4f4;stroke-width:3.500;transform:skewX(-12deg);will-change:auto;">背景</div>
<svg style="left:613px;top:176px;" width="187" height="90" viewBox="613 176 187 90"><rect x="687.600" y="181.800" width="8.800" height="7.600" fill="none" stroke="#a0a0a0" stroke-width="1"/><path d="M688.600 188.400l2.400-3 1.600 1.800 1.200-1 1.600 2.200z" fill="#a0a0a0"/><circle cx="693.800" cy="184" r=".8" fill="#a0a0a0"/><circle cx="711" cy="185.600" r="3.900" fill="none" stroke="#a0a0a0" stroke-width="1"/><path d="M708.200 188.400a3.900 3.900 0 0 1 5.600-5.600z" fill="#a0a0a0"/><path d="M724.600 181.400h8.600v2.600h-.7c-.2-1.100-.6-1.600-1.600-1.600h-1.100v6c0 .7.400.9 1.400.9v.7h-4.600v-.7c1 0 1.400-.2 1.400-.9v-6h-1.100c-1 0-1.400.5-1.600 1.600h-.7z" fill="#a0a0a0"/><rect x="744" y="182.200" width="7.600" height="7" fill="none" stroke="#a0a0a0" stroke-width="1"/><rect x="743" y="181.200" width="2" height="2" fill="#a0a0a0"/><rect x="743" y="188.200" width="2" height="2" fill="#a0a0a0"/><rect x="750.6" y="181.200" width="2" height="2" fill="#a0a0a0"/><rect x="750.6" y="188.200" width="2" height="2" fill="#a0a0a0"/><path d="M762 182h4.600l2 2v6H762z" fill="none" stroke="#a0a0a0" stroke-width="1"/><path d="M765.400 186.200h4.400v4.400h-4.400z" fill="#a0a0a0"/><path d="M766.400 186.200v-1.300a1.200 1.200 0 0 1 2.400 0v1.300" fill="none" stroke="#a0a0a0" stroke-width=".8"/><rect x="789.300" y="180" width="6.400" height="13" rx="1.500" fill="#3e3e3e" stroke="#2f2f2f" stroke-width=".6"/><rect x="790.300" y="180.800" width="4.400" height="4.600" rx="1" fill="#7a7a7a"/><g transform="translate(0 -1)"><rect x="647.4" y="227.600" width="2.400" height="2.400" fill="#a0a0a0"/><rect x="647.4" y="232.400" width="2.400" height="2.400" fill="#a0a0a0"/><rect x="649.8" y="230.0" width="2.400" height="2.400" fill="#a0a0a0"/><rect x="652.1999999999999" y="227.600" width="2.400" height="2.400" fill="#a0a0a0"/><rect x="652.1999999999999" y="232.400" width="2.400" height="2.400" fill="#a0a0a0"/><rect x="647.400" y="227.600" width="7.200" height="7.200" fill="none" stroke="#a0a0a0" stroke-width=".7"/><path d="M673.600 226.200L669 231.600" stroke="#a0a0a0" stroke-width="1.400" stroke-linecap="round"/><path d="M669.200 230.800c-1.600-.2-2.600.6-3.200 1.600-.4.800-1.200 1.100-2 1.200 1.800 1.200 4.800.8 6-.6.600-.8.200-1.800-.8-2.200z" fill="#a0a0a0"/><g transform="translate(685.600 231.200) scale(.8) translate(-685.600 -231.200)"><path d="M685.600 226.400v9.600M680.800 231.200h9.600" stroke="#a0a0a0" stroke-width="1.200"/><path d="M685.600 225.200l1.600 1.900h-3.200zM685.600 237.200l1.600-1.900h-3.200zM679.600 231.200l1.900-1.600v3.200zM691.600 231.200l-1.900-1.600v3.200z" fill="#a0a0a0"/></g><rect x="699.200" y="230.400" width="7.200" height="5.600" rx=".6" fill="#a0a0a0"/><path d="M700.800 230.400v-1.700a2 2 0 0 1 4 0v1.700" fill="none" stroke="#a0a0a0" stroke-width="1.100"/><rect x="702.300" y="232.200" width="1" height="2" fill="#535353"/></g><path d="M619 252.600c2.600-3.600 8-3.600 10.600 0-2.600 3.400-8 3.400-10.600 0z" fill="none" stroke="#c8c8c8" stroke-width="1"/><circle cx="624.300" cy="252.300" r="1.900" fill="#c8c8c8"/><rect x="766" y="251.400" width="7.600" height="5.800" rx=".6" fill="none" stroke="#e6e6e6" stroke-width="1"/><path d="M767.800 251.400v-1.600a2 2 0 0 1 4 0v1.600" fill="none" stroke="#e6e6e6" stroke-width="1"/><rect x="769.300" y="253.200" width="1" height="2.200" fill="#e6e6e6"/></svg>
</body></html>
